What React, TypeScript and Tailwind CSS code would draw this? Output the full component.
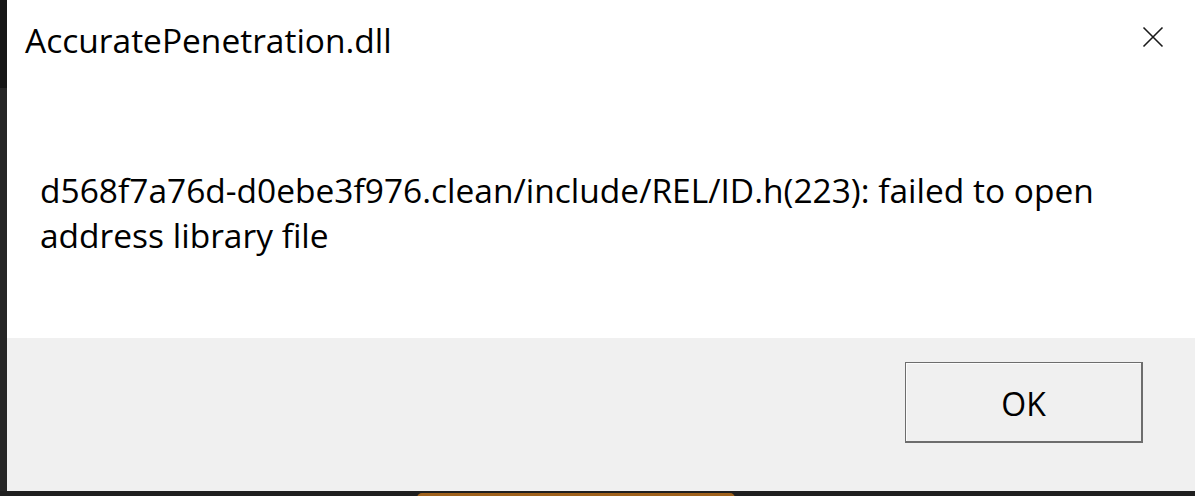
import React from "react";

const font = { fontFamily: '"Segoe UI", "Open Sans", "Noto Sans", sans-serif' };

const CloseIcon = () => (
  <svg width="22" height="22" viewBox="0 0 22 22" className="block">
    <path d="M1.5 1.5 L20.5 20.5 M20.5 1.5 L1.5 20.5" stroke="#1a1a1a" strokeWidth="1.6" />
  </svg>
);

const MessageBox = () => {
  return (
    <div className="flex-1 flex flex-col bg-white" style={font}>
      <div className="h-[338px] flex flex-col">
        <div className="flex items-start justify-between h-[82px]">
          <h1 className="pl-[18px] pt-[17px] text-[33.5px] leading-[46px] text-[#000]">
            AccuratePenetration.dll
          </h1>
          <button className="mt-[26px] mr-[31px]">
            <CloseIcon />
          </button>
        </div>
        <p className="pl-[33px] pt-[86px] pr-[40px] text-[33.5px] leading-[45px] text-[#000] whitespace-nowrap">
          d568f7a76d-d0ebe3f976.clean/include/REL/ID.h(223): failed to open
          <br />
          address library file
        </p>
      </div>
      <div className="h-[153px] bg-[#f0f0f0] flex justify-end items-start pt-[24px] pr-[52px]">
        <button className="w-[238px] h-[81px] bg-[#f0f0f0] border border-[#6d6d6d] border-r-2 border-b-2 shadow-[inset_1px_1px_0_#fcfcfc] text-[32px] text-black flex items-center justify-center pt-[4px]">
          OK
        </button>
      </div>
    </div>
  );
};

export default function App() {
  return (
    <div className="w-[1195px] h-[496px] overflow-hidden flex flex-col bg-[#1f1f1f]">
      <div className="flex h-[491px]">
        <div className="w-[7px] flex flex-col">
          <div className="h-[88px] bg-[#161616]" />
          <div className="flex-1 bg-[#262626]" />
        </div>
        <MessageBox />
      </div>
      <div className="flex-1 flex pt-[2px]">
        <div className="ml-[417px] w-[318px] h-[6px] rounded-t-[5px] bg-[#a0621c]" />
      </div>
    </div>
  );
}
